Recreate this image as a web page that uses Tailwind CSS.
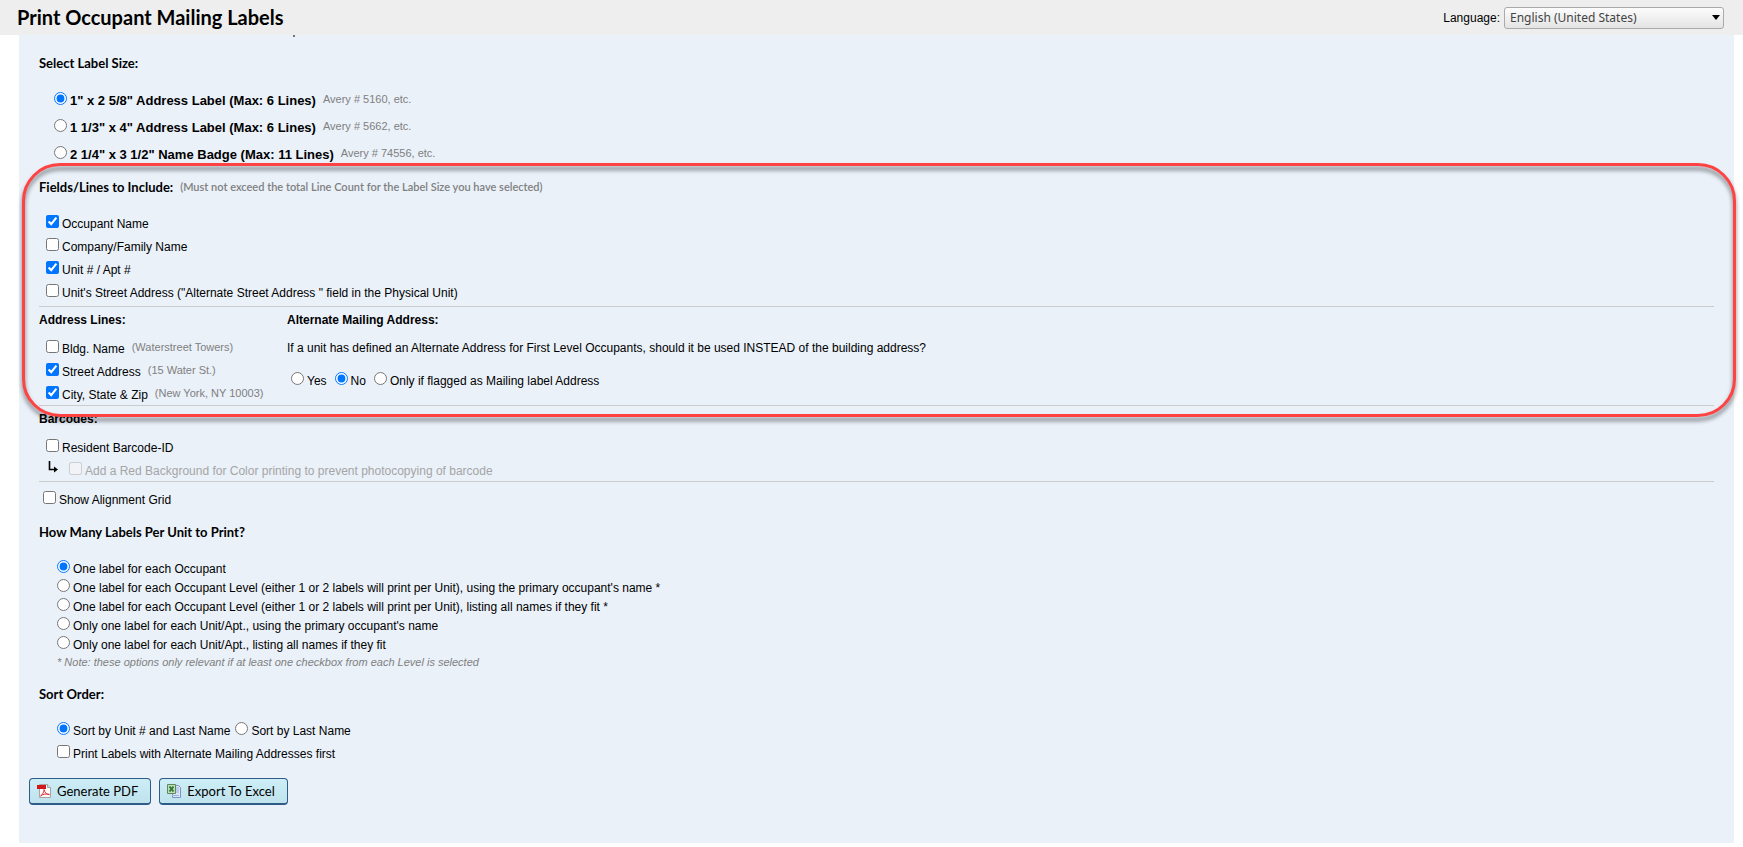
<!DOCTYPE html>
<html lang="en">
  <head>
    <meta charset="UTF-8" />
    <meta name="viewport" content="width=device-width, initial-scale=1.0" />
    <title>Print Occupant Mailing Labels</title>
    <script src="https://cdn.jsdelivr.net/npm/@tailwindcss/browser@4"></script>
  </head>
  <body class="bg-white text-black text-[12px] leading-4 font-['Liberation_Sans',Arial,sans-serif]">
    <header class="flex items-center justify-between h-[35px] bg-[#eee] pl-[17px] pr-[19px]">
      <h1 class="font-[Lato,sans-serif] text-[20px] leading-6 font-bold pb-[2px]">Print Occupant Mailing Labels</h1>
      <div class="flex items-center gap-1">
        <label for="language">Language:</label>
        <div class="relative">
          <select id="language" class="appearance-none w-[220px] h-[22px] pl-[5px] pr-6 pt-px rounded-[3px] border border-[#aaa] bg-linear-to-b from-[#fcfcfc] to-[#e4e4e4] text-[#444] text-[12px] leading-4 font-['Noto_Sans',sans-serif]">
            <option>English (United States)</option>
          </select>
          <svg class="absolute right-1 top-2 w-2 h-[5px] pointer-events-none" viewBox="0 0 8 5"><path d="M0 0h8L4 5z" fill="#000" /></svg>
        </div>
      </div>
    </header>

    <main class="relative ml-[19px] mr-[9px] px-5 pt-[18px] pb-[38px] bg-[#eaf1f9]">
      <span class="absolute left-[274px] top-0 w-[2px] h-[2px] bg-[#7d7468]"></span>

      <h2 class="font-[Lato,sans-serif] text-[13px] leading-5 font-bold mb-[14px]">Select Label Size:</h2>
      <div class="pl-[15px] text-[13px]">
        <div class="flex items-center gap-[3px] h-[27px]">
          <input type="radio" name="size" id="size1" class="w-[13px] h-[13px] mb-1" checked />
          <label for="size1" class="font-bold">1" x 2 5/8" Address Label (Max: 6 Lines)</label>
          <span class="text-[11px] text-[#808080] pl-1 pb-1">Avery # 5160, etc.</span>
        </div>
        <div class="flex items-center gap-[3px] h-[27px]">
          <input type="radio" name="size" id="size2" class="w-[13px] h-[13px] mb-1" />
          <label for="size2" class="font-bold">1 1/3" x 4" Address Label (Max: 6 Lines)</label>
          <span class="text-[11px] text-[#808080] pl-1 pb-1">Avery # 5662, etc.</span>
        </div>
        <div class="flex items-center gap-[3px] h-[27px]">
          <input type="radio" name="size" id="size3" class="w-[13px] h-[13px] mb-1" />
          <label for="size3" class="font-bold">2 1/4" x 3 1/2" Name Badge (Max: 11 Lines)</label>
          <span class="text-[11px] text-[#808080] pl-1 pb-1">Avery # 74556, etc.</span>
        </div>
      </div>

      <div class="flex items-center gap-[7px] mt-[9px] mb-4 font-[Lato,sans-serif]">
        <h2 class="text-[13px] leading-5 font-bold">Fields/Lines to Include:</h2>
        <span class="text-[11px] font-semibold text-[#808080]">(Must not exceed the total Line Count for the Label Size you have selected)</span>
      </div>
      <div class="flex flex-col gap-[2px] pl-[7px] pb-[3px]">
        <div class="flex items-center gap-[3px] h-[21px]">
          <input type="checkbox" id="occupant" class="w-[13px] h-[13px] mb-1" checked />
          <label for="occupant">Occupant Name</label>
        </div>
        <div class="flex items-center gap-[3px] h-[21px]">
          <input type="checkbox" id="company" class="w-[13px] h-[13px] mb-1" />
          <label for="company">Company/Family Name</label>
        </div>
        <div class="flex items-center gap-[3px] h-[21px]">
          <input type="checkbox" id="unit" class="w-[13px] h-[13px] mb-1" checked />
          <label for="unit">Unit # / Apt #</label>
        </div>
        <div class="flex items-center gap-[3px] h-[21px]">
          <input type="checkbox" id="unitStreet" class="w-[13px] h-[13px] mb-1" />
          <label for="unitStreet">Unit's Street Address ("Alternate Street Address " field in the Physical Unit)</label>
        </div>
      </div>

      <div class="grid grid-cols-[248px_1fr] border-t border-[#ccc] pt-[5px]">
        <div>
          <h3 class="font-bold mb-[10px]">Address Lines:</h3>
          <div class="flex flex-col gap-[2px] pl-[7px]">
            <div class="flex items-center gap-[3px] h-[21px]">
              <input type="checkbox" id="bldg" class="w-[13px] h-[13px] mb-1" />
              <label for="bldg">Bldg. Name</label>
              <span class="text-[11px] text-[#808080] pl-1 pb-1">(Waterstreet Towers)</span>
            </div>
            <div class="flex items-center gap-[3px] h-[21px]">
              <input type="checkbox" id="street" class="w-[13px] h-[13px] mb-1" checked />
              <label for="street">Street Address</label>
              <span class="text-[11px] text-[#808080] pl-1 pb-1">(15 Water St.)</span>
            </div>
            <div class="flex items-center gap-[3px] h-[21px]">
              <input type="checkbox" id="city" class="w-[13px] h-[13px] mb-1" checked />
              <label for="city">City, State &amp; Zip</label>
              <span class="text-[11px] text-[#808080] pl-1 pb-1">(New York, NY 10003)</span>
            </div>
          </div>
        </div>
        <div>
          <h3 class="font-bold mb-3">Alternate Mailing Address:</h3>
          <p class="mb-[14px]">If a unit has defined an Alternate Address for First Level Occupants, should it be used INSTEAD of the building address?</p>
          <div class="flex items-center gap-2 h-[21px] pl-1">
            <div class="flex items-center gap-[3px]">
              <input type="radio" name="alt" id="altYes" class="w-[13px] h-[13px] mb-1" />
              <label for="altYes">Yes</label>
            </div>
            <div class="flex items-center gap-[3px]">
              <input type="radio" name="alt" id="altNo" class="w-[13px] h-[13px] mb-1" checked />
              <label for="altNo">No</label>
            </div>
            <div class="flex items-center gap-[3px]">
              <input type="radio" name="alt" id="altFlag" class="w-[13px] h-[13px] mb-1" />
              <label for="altFlag">Only if flagged as Mailing label Address</label>
            </div>
          </div>
        </div>
      </div>

      <div class="border-y border-[#ccc] pt-[5px]">
        <h3 class="font-bold mb-[10px]">Barcodes:</h3>
        <div class="flex flex-col gap-[2px] pl-[7px]">
          <div class="flex items-center gap-[3px] h-[21px]">
            <input type="checkbox" id="barcode" class="w-[13px] h-[13px] mb-1" />
            <label for="barcode">Resident Barcode-ID</label>
          </div>
          <div class="flex items-center gap-[3px] h-[21px] text-[#a5a5a5]">
            <svg class="w-[20px] h-[13px] mb-2" viewBox="0 0 20 13" fill="none" stroke="#000"><path d="M3.5 1v8.5H10" stroke-width="1.6" /><path d="M8 6.5l4 3-4 3z" fill="#000" stroke="none" /></svg>
            <input type="checkbox" id="redbg" class="w-[13px] h-[13px] mb-1" disabled />
            <label for="redbg">Add a Red Background for Color printing to prevent photocopying of barcode</label>
          </div>
        </div>
      </div>

      <div class="flex items-center gap-[3px] h-[21px] mt-[7px] pl-1">
        <input type="checkbox" id="grid" class="w-[13px] h-[13px] mb-1" />
        <label for="grid">Show Alignment Grid</label>
      </div>

      <h2 class="font-[Lato,sans-serif] text-[13px] leading-5 font-bold mt-3 mb-[17px]">How Many Labels Per Unit to Print?</h2>
      <div class="pl-[18px]">
        <div class="flex items-center gap-[3px] h-[19px]">
          <input type="radio" name="count" id="count1" class="w-[13px] h-[13px] mb-1" checked />
          <label for="count1">One label for each Occupant</label>
        </div>
        <div class="flex items-center gap-[3px] h-[19px]">
          <input type="radio" name="count" id="count2" class="w-[13px] h-[13px] mb-1" />
          <label for="count2">One label for each Occupant Level (either 1 or 2 labels will print per Unit), using the primary occupant's name *</label>
        </div>
        <div class="flex items-center gap-[3px] h-[19px]">
          <input type="radio" name="count" id="count3" class="w-[13px] h-[13px] mb-1" />
          <label for="count3">One label for each Occupant Level (either 1 or 2 labels will print per Unit), listing all names if they fit *</label>
        </div>
        <div class="flex items-center gap-[3px] h-[19px]">
          <input type="radio" name="count" id="count4" class="w-[13px] h-[13px] mb-1" />
          <label for="count4">Only one label for each Unit/Apt., using the primary occupant's name</label>
        </div>
        <div class="flex items-center gap-[3px] h-[19px]">
          <input type="radio" name="count" id="count5" class="w-[13px] h-[13px] mb-1" />
          <label for="count5">Only one label for each Unit/Apt., listing all names if they fit</label>
        </div>
        <p class="text-[11px] italic text-[#808080]">* Note: these options only relevant if at least one checkbox from each Level is selected</p>
      </div>

      <h2 class="font-[Lato,sans-serif] text-[13px] leading-5 font-bold mt-[14px] mb-4">Sort Order:</h2>
      <div class="flex flex-col gap-[2px] pl-[18px]">
        <div class="flex items-center gap-[3px] h-[21px]">
          <input type="radio" name="sort" id="sortUnit" class="w-[13px] h-[13px] mb-1" checked />
          <label for="sortUnit">Sort by Unit # and Last Name</label>
          <input type="radio" name="sort" id="sortName" class="w-[13px] h-[13px] mb-1 ml-[2px]" />
          <label for="sortName">Sort by Last Name</label>
        </div>
        <div class="flex items-center gap-[3px] h-[21px]">
          <input type="checkbox" id="altFirst" class="w-[13px] h-[13px] mb-1" />
          <label for="altFirst">Print Labels with Alternate Mailing Addresses first</label>
        </div>
      </div>

      <div class="flex gap-2 mt-[14px] -ml-[10px] font-[Lato,sans-serif] text-[13px]">
        <button class="flex items-center gap-[6px] h-[27px] pl-[7px] pr-3 rounded-[4px] border border-b-2 border-[#2f5b88] bg-linear-to-b from-[#cdeef7] to-[#bfe2ec]">
          <svg class="w-[14px] h-[14px]" viewBox="0 0 14 14">
            <path d="M2.5.5h8l3 3v10h-11z" fill="#fbfbfb" stroke="#a5a5a5" />
            <path d="M10.5.5v3h3" fill="#ddd" stroke="#a5a5a5" />
            <path d="M0 1h9v4H0z" fill="#d3161b" />
            <path d="M3.5 12c2-1 4-5 3.500-6.500C8 9 9.500 10.500 12.500 10.500 9.500 9.500 6 10 3.500 12z" fill="none" stroke="#e0353a" />
          </svg>
          Generate PDF
        </button>
        <button class="flex items-center gap-[6px] h-[27px] pl-[7px] pr-3 rounded-[4px] border border-b-2 border-[#2f5b88] bg-linear-to-b from-[#cdeef7] to-[#bfe2ec]">
          <svg class="w-[14px] h-[14px]" viewBox="0 0 14 14">
            <path d="M5.500 1.500h6l2 2v10h-8z" fill="#dce7f7" stroke="#7a93c4" />
            <path d="M9 4h3M9 6h3M9 8h3M5 11.500h7" stroke="#9bb1da" />
            <path d="M.5.500h8v9h-8z" fill="#c3ddbc" stroke="#5d8a5a" />
            <path d="M2.500 2.500l4 5M6.500 2.500l-4 5" stroke="#2c7a35" stroke-width="2" />
          </svg>
          Export To Excel
        </button>
      </div>

      <!-- callout around the field options -->
      <div class="absolute left-[3px] right-[-2px] top-32 h-[254px] rounded-[38px] border-3 border-[#ff4343] drop-shadow-[0_4px_2px_rgb(0_0_0/0.5)] pointer-events-none"></div>
    </main>
  </body>
</html>
